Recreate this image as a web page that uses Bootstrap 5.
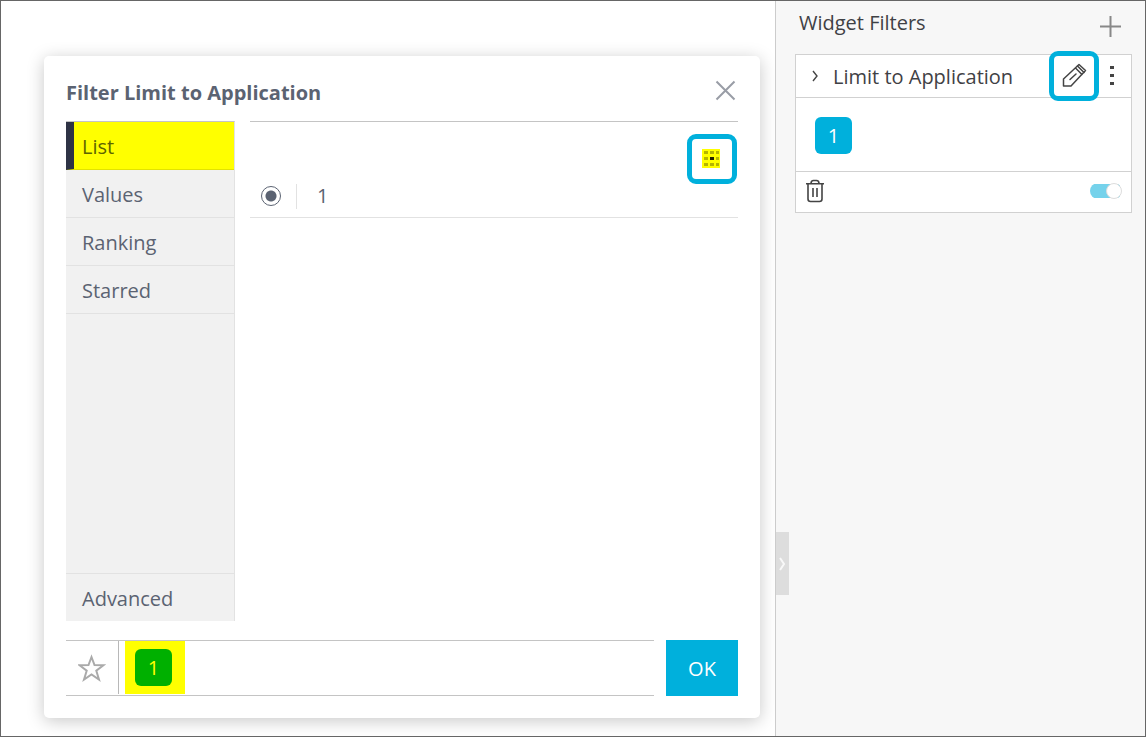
<!DOCTYPE html>
<html lang="en">
<head>
<meta charset="utf-8">
<meta name="viewport" content="width=device-width, initial-scale=1">
<title>Widget Filters</title>
<link href="https://cdn.jsdelivr.net/npm/bootstrap@5.3.0/dist/css/bootstrap.min.css" rel="stylesheet">
<style>
  :root { --accent: #00b0dc; --slate: #5b6372; --rule: #c4c4c4; --soft: #e2e2e2; }
  body { font: 20px/28px "Open Sans", "Noto Sans", sans-serif; color: var(--slate); background: #fff; }
  .app-frame { min-height: 100vh; border: 1px solid #666; }
  .canvas { padding: 55px 15px 18px 43px; overflow: hidden; }
  .filter-dialog { padding: 22px; border-radius: 5px; background: #fff; box-shadow: 0 3px 17px rgba(0,0,0,.22); }
  .dialog-head { height: 43px; }
  .dialog-title { font-size: 20px; line-height: 30px; font-weight: 700; }
  .plain-btn { border: 0; padding: 0; background: none; color: inherit; line-height: 0; }
  .side-tabs { width: 169px; background: #f1f1f1; border-right: 1px solid var(--soft); border-top: 1px solid var(--rule); }
  .side-tabs a { display: block; height: 48px; padding: 11px 16px; line-height: 28px; color: var(--slate); text-decoration: none; border-bottom: 1px solid var(--soft); }
  .side-tabs a.chosen { background: #ff0; color: #5d6400; border-left: 8px solid #2e3345; padding-left: 8px; border-bottom-color: #e2e200; }
  .side-tabs a.last-tab { border-top: 1px solid var(--soft); border-bottom: 0; }
  .list-pane { border-top: 1px solid var(--rule); margin-left: 15px; }
  .pane-tools { padding: 12px 1px 0 0; }
  .ringed { width: 50px; height: 50px; border: 5px solid var(--accent); border-radius: 9px; background: #fff; padding: 0; color: #444; display: flex; align-items: center; justify-content: center; position: relative; z-index: 1; }
  .option-row { height: 34px; border-bottom: 1px solid var(--soft); padding: 0 0 9px 11px; }
  .option-row input { appearance: none; width: 20px; height: 20px; margin: 0; border: 1px solid var(--slate); border-radius: 50%; background: #fff; }
  .option-row input:checked { background: radial-gradient(circle, var(--slate) 0 5px, #fff 6px); }
  .option-row .divide { width: 1px; height: 25px; background: var(--soft); margin: 0 20px 0 15px; }
  .dialog-foot { margin-top: 19px; }
  .selection { border: solid var(--rule); border-width: 1px 0; height: 56px; }
  .star-btn { width: 53px; border-right: 1px solid #b8b8b8; color: #aaa; height: 53px; }
  .tag { width: 37px; height: 37px; border-radius: 6px; background: var(--accent); color: #fff; display: flex; align-items: center; justify-content: center; }
  .marked { background: #ff0; width: 60px; height: 53px; margin-left: 6px; padding: 8px 10px; }
  .marked .tag { background: #00b000; color: #ff0; }
  .ok-btn { width: 72px; height: 56px; border: 0; background: var(--accent); color: #fff; margin-left: 12px; padding: 2px 0 0; }
  .filters-side { width: 370px; background: #f7f7f7; border-left: 1px solid #ccc; padding: 7px 13px 0 19px; color: #3f4145; position: relative; }
  .filters-side h2 { font-size: 20px; line-height: 30px; font-weight: 400; }
  .filter-card { border: 1px solid #d1d1d1; background: #fff; margin-top: 16px; }
  .card-head { height: 43px; border-bottom: 1px solid #d1d1d1; padding: 0 14px 0 13px; }
  .card-name { padding: 2px 0 0 12px; }
  .card-tags { height: 74px; border-bottom: 1px solid #d1d1d1; padding: 19px; }
  .card-foot { height: 40px; padding: 0 9px 2px 9px; }
  .toggle { appearance: none; width: 32px; height: 16px; margin: 0; border-radius: 8px; background: linear-gradient(#75d2eb, #75d2eb) 0 1px / 30px 14px no-repeat; position: relative; }
  .toggle::after { content: ""; position: absolute; right: 0; top: 0; width: 16px; height: 16px; border-radius: 50%; border: 1px solid #ddd; background: #fff; }
  .collapse-handle { position: absolute; left: 0; bottom: 141px; width: 13px; height: 63px; background: #ddd; color: #f8f8f8; border: 0; padding: 0; line-height: 0; }
</style>
</head>
<body>
<div class="app-frame d-flex">
  <main class="canvas flex-grow-1 d-flex">
    <section class="filter-dialog flex-grow-1 d-flex flex-column" role="dialog" aria-labelledby="dlg-title">
      <header class="dialog-head d-flex justify-content-between align-items-start">
        <h1 class="dialog-title m-0" id="dlg-title">Filter Limit to Application</h1>
        <button class="plain-btn" type="button" aria-label="Close">
          <svg width="25" height="25" viewBox="0 0 25 25" fill="none" stroke="#999da6" stroke-width="2"><path d="M3.500 3.500 21.500 21.500M21.500 3.500 3.500 21.500"/></svg>
        </button>
      </header>
      <div class="d-flex flex-grow-1">
        <nav class="side-tabs d-flex flex-column flex-shrink-0" aria-label="Filter type">
          <a class="chosen" href="#list">List</a>
          <a href="#values">Values</a>
          <a href="#ranking">Ranking</a>
          <a href="#starred">Starred</a>
          <a class="last-tab mt-auto" href="#advanced">Advanced</a>
        </nav>
        <div class="list-pane flex-grow-1">
          <div class="pane-tools d-flex justify-content-end">
            <button class="ringed" type="button" aria-label="Selection mode">
              <svg width="20" height="20" viewBox="0 0 20 20"><path fill="#ff0" d="M0 0h18v19H0z"/><path fill="#b5b500" d="M2 2h4v3H2zM8 2h4v3H8zM14 2h3v3h-3zM2 8h4v3H2zM14 8h3v3h-3zM2 14h4v3H2zM8 14h4v3H8zM14 14h3v3h-3z"/><path fill="#222200" d="M8 8h4v3H8z"/></svg>
            </button>
          </div>
          <div class="option-row d-flex align-items-center">
            <input type="radio" id="opt1" name="opt" checked>
            <span class="divide"></span>
            <label for="opt1">1</label>
          </div>
        </div>
      </div>
      <footer class="dialog-foot d-flex">
        <div class="selection flex-grow-1 d-flex">
          <button class="plain-btn star-btn" type="button" aria-label="Star">
            <svg width="28" height="28" viewBox="0 0 28 28" fill="none" stroke="currentColor" stroke-width="2"><path d="m13.500 3 3 8 9 .2-7.200 5.500 2.700 8.800-7.500-5-7.500 5 2.700-8.800-7.200-5.500 9-.2z"/></svg>
          </button>
          <div class="marked"><span class="tag">1</span></div>
        </div>
        <button class="ok-btn" type="button">OK</button>
      </footer>
    </section>
  </main>
  <aside class="filters-side flex-shrink-0">
    <div class="d-flex justify-content-between">
      <h2 class="m-0 ms-1">Widget Filters</h2>
      <button class="plain-btn me-2 mt-2" type="button" aria-label="Add filter">
        <svg width="25" height="22" viewBox="0 0 25 22" fill="none" stroke="#888" stroke-width="2"><path d="M1 10.500h21M11.500 0v21"/></svg>
      </button>
    </div>
    <section class="filter-card">
      <div class="card-head d-flex align-items-center">
        <button class="plain-btn" type="button" aria-label="Expand">
          <svg width="12" height="14" viewBox="0 0 12 14" fill="none" stroke="#444" stroke-width="1.400"><path d="m4 2 4 5-4 5"/></svg>
        </button>
        <span class="card-name flex-grow-1">Limit to Application</span>
        <button class="ringed" type="button" aria-label="Edit filter">
          <svg width="26" height="26" viewBox="0 0 26 26" fill="none" stroke="#444" stroke-width="1.500" stroke-linejoin="round" stroke-linecap="round"><path d="M18 1.500 24.500 7.500 10 23H2.500v-7zM14.500 5l6.500 6.500M9 16.500l6-5.500"/><path d="m16.500 3 6.500 6.500"/></svg>
        </button>
        <button class="plain-btn ms-2" type="button" aria-label="More">
          <svg width="10" height="22" viewBox="0 0 10 22" fill="#444"><path d="M3 1h4v3H3zM3 9h4v3H3zM3 17h4v3H3z"/></svg>
        </button>
      </div>
      <div class="card-tags"><span class="tag">1</span></div>
      <div class="card-foot d-flex align-items-center justify-content-between">
        <button class="plain-btn" type="button" aria-label="Delete filter">
          <svg width="20" height="24" viewBox="0 0 20 24" fill="none" stroke="#444" stroke-width="1.600"><path d="M1 4.800h18M6 4.500c0-2 1-3 2.500-3h3c1.500 0 2.500 1 2.500 3M3 5v15q0 2.500 2.500 2.500h9Q17 22.500 17 20V5M8 9v9M12 9v9"/></svg>
        </button>
        <input class="toggle" type="checkbox" role="switch" aria-label="Filter enabled" checked>
      </div>
    </section>
    <button class="collapse-handle" type="button" aria-label="Collapse panel">
      <svg width="11" height="16" viewBox="0 0 11 16" fill="none" stroke="currentColor" stroke-width="2"><path d="m3 2 4 6-4 6"/></svg>
    </button>
  </aside>
</div>
<script src="https://cdn.jsdelivr.net/npm/bootstrap@5.3.0/dist/js/bootstrap.bundle.min.js"></script>
</body>
</html>
